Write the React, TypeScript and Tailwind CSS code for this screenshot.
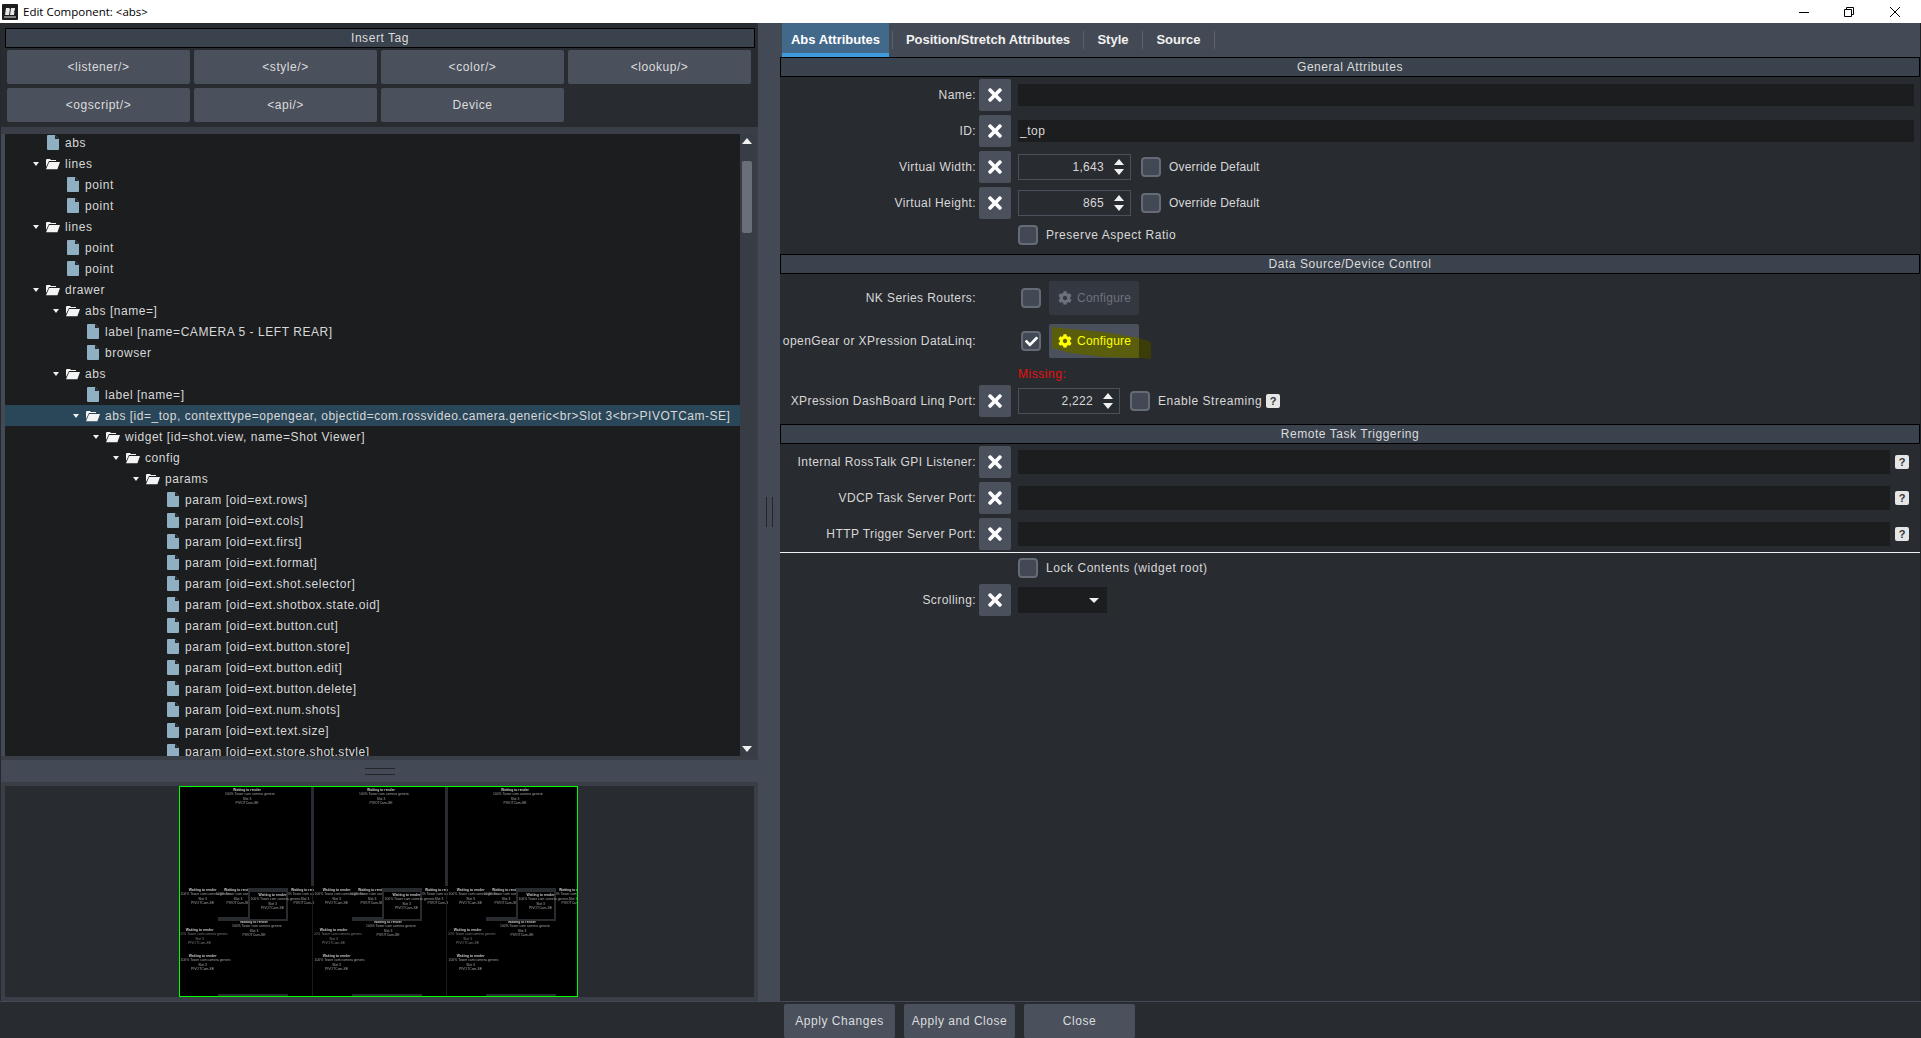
import { FaCheck, FaCog, FaTimes } from 'react-icons/fa';

const TAGS = ['<listener/>', '<style/>', '<color/>', '<lookup/>', '<ogscript/>', '<api/>', 'Device'];

type Node = { level: number; text: string; folder?: boolean; selected?: boolean };

const TREE: Node[] = [
  { level: 0, text: 'abs' },
  { level: 0, text: 'lines', folder: true },
  { level: 1, text: 'point' },
  { level: 1, text: 'point' },
  { level: 0, text: 'lines', folder: true },
  { level: 1, text: 'point' },
  { level: 1, text: 'point' },
  { level: 0, text: 'drawer', folder: true },
  { level: 1, text: 'abs [name=]', folder: true },
  { level: 2, text: 'label [name=CAMERA 5 - LEFT REAR]' },
  { level: 2, text: 'browser' },
  { level: 1, text: 'abs', folder: true },
  { level: 2, text: 'label [name=]' },
  {
    level: 2,
    text: 'abs [id=_top, contexttype=opengear, objectid=com.rossvideo.camera.generic<br>Slot 3<br>PIVOTCam-SE]',
    folder: true,
    selected: true,
  },
  { level: 3, text: 'widget [id=shot.view, name=Shot Viewer]', folder: true },
  { level: 4, text: 'config', folder: true },
  { level: 5, text: 'params', folder: true },
  { level: 6, text: 'param [oid=ext.rows]' },
  { level: 6, text: 'param [oid=ext.cols]' },
  { level: 6, text: 'param [oid=ext.first]' },
  { level: 6, text: 'param [oid=ext.format]' },
  { level: 6, text: 'param [oid=ext.shot.selector]' },
  { level: 6, text: 'param [oid=ext.shotbox.state.oid]' },
  { level: 6, text: 'param [oid=ext.button.cut]' },
  { level: 6, text: 'param [oid=ext.button.store]' },
  { level: 6, text: 'param [oid=ext.button.edit]' },
  { level: 6, text: 'param [oid=ext.button.delete]' },
  { level: 6, text: 'param [oid=ext.num.shots]' },
  { level: 6, text: 'param [oid=ext.text.size]' },
  { level: 6, text: 'param [oid=ext.store.shot.style]' },
];

const TILES = [
  { x: 67, y: 1, dim: false },
  { x: 22.6, y: 101, dim: false },
  { x: 58, y: 101, dim: false },
  { x: 125, y: 101, dim: false },
  { x: 74, y: 133, dim: false },
  { x: 19.6, y: 141, dim: true },
  { x: 22.6, y: 167, dim: false },
];

const FileIcon = () => (
  <svg width="12" height="15" viewBox="0 0 12 15" className="shrink-0">
    <path d="M1 0h7l4 4v10a1 1 0 0 1-1 1H1a1 1 0 0 1-1-1V1a1 1 0 0 1 1-1z" fill="#8fb0c2" />
    <path d="M8 0v4h4z" fill="#22262b" />
  </svg>
);

const FolderIcon = () => (
  <svg width="14" height="12" viewBox="0 0 14 12" className="shrink-0">
    <path d="M0 2a1 1 0 0 1 1-1h3l1 1h5v1H3L0 9z" fill="#f4f4f4" />
    <path d="M3.2 4H14l-2.6 7.2H0z" fill="#f4f4f4" />
  </svg>
);

const Caret = () => (
  <svg width="6" height="4" viewBox="0 0 6 4" className="shrink-0">
    <path d="M0 0h6L3 4z" fill="#f0f0f0" />
  </svg>
);

const TreeRow = ({ node }: { node: Node }) => (
  <div
    className={`flex h-[21px] items-center whitespace-nowrap ${node.selected ? 'bg-[#2a4659] tracking-[0.52px]' : ''}`}
    style={{ paddingLeft: (node.folder ? 28 : 42) + node.level * 20 }}
  >
    {node.folder && <Caret />}
    {node.folder ? (
      <span className="ml-[7px] mr-[5px] flex">
        <FolderIcon />
      </span>
    ) : (
      <span className="mr-[6px] flex">
        <FileIcon />
      </span>
    )}
    <span>{node.text}</span>
  </div>
);

const SectionHeader = ({ title, className = '' }: { title: string; className?: string }) => (
  <div
    className={`flex h-[20px] items-center justify-center border border-black bg-[#3a424d] text-[#dcdcdc] ${className}`}
  >
    {title}
  </div>
);

const ClearButton = () => (
  <button className="flex h-8 w-8 shrink-0 items-center justify-center rounded-[2px] bg-[#4a505c] text-white">
    <FaTimes className="h-[20px] w-[14px]" />
  </button>
);

const CheckBox = ({ checked, className = '' }: { checked?: boolean; className?: string }) => (
  <span
    className={`flex h-[20px] w-[20px] shrink-0 items-center justify-center rounded-[4px] border-2 border-[#656b76] bg-[#434954] text-white ${className}`}
  >
    {checked && <FaCheck className="h-[13px] w-[13px]" />}
  </span>
);

const Spinner = ({ value, className }: { value: string; className: string }) => (
  <div className={`flex h-[26px] items-center border border-[#4a505c] ${className}`}>
    <span className="flex-1 text-right tracking-[0.3px]">{value}</span>
    <svg width="10" height="16" viewBox="0 0 10 16" className="ml-[10px] mr-[6px] shrink-0">
      <path d="M5 0l5 6H0zM0 10h10l-5 6z" fill="#f0f0f0" />
    </svg>
  </div>
);

const HelpIcon = ({ className = '' }: { className?: string }) => (
  <span
    className={`flex h-[14px] w-[14px] shrink-0 items-center justify-center rounded-[2px] bg-[#e6e6e6] text-[11px] font-bold tracking-normal text-[#33363c] ${className}`}
  >
    ?
  </span>
);

const Row = ({ label, className = '', children }: { label: string; className?: string; children?: React.ReactNode }) => (
  <div className={`flex h-8 items-center ${className}`}>
    <span className="w-[196px] shrink-0 whitespace-nowrap text-right tracking-[0.42px]">{label}</span>
    <span className="ml-[3px] mr-[7px] flex">
      <ClearButton />
    </span>
    {children}
  </div>
);

const TextRow = ({ label, value, help }: { label: string; value?: string; help?: boolean }) => (
  <Row label={label}>
    <div
      className={`flex items-center bg-[#1b1d1f] px-[2px] ${
        help ? 'h-[24px] w-[872px]' : 'h-[22px] w-[896px]'
      }`}
    >
      {value}
    </div>
    {help && <HelpIcon className="ml-[5px]" />}
  </Row>
);

const ConfigureButton = ({ active }: { active?: boolean }) => (
  <div
    className={`relative ml-[8px] flex h-[34px] w-[90px] items-center rounded-[2px] pl-[9px] tracking-[0.25px] ${
      active ? 'bg-[#4a505c] text-[#ffff00]' : 'bg-[#343841] text-[#6c717a]'
    }`}
  >
    {active && (
      <svg width="102" height="35" viewBox="0 0 102 35" className="absolute left-0 top-0">
        <path d="M90 14l12 4v17l-12-1z" fill="#3b3d08" />
        <path d="M3 3l18 2 33 3 36 6v20l-36-1-33-4-18-5z" fill="#5a5e0c" />
      </svg>
    )}
    <FaCog className="relative h-[14px] w-[14px] shrink-0" />
    <span className="relative ml-[5px]">Configure</span>
  </div>
);

const Tile = ({ x, y, dim }: { x: number; y: number; dim?: boolean }) => (
  <div
    className={`absolute w-[44px] text-center text-[3.4px] leading-[4.3px] tracking-normal whitespace-nowrap blur-[0.25px] ${
      dim ? 'text-[#7a7a7a]' : 'text-[#a0a0a0]'
    }`}
    style={{ left: x - 22, top: y }}
  >
    <div className="font-bold text-[#c8c8c8]">Waiting to render</div>
    <div>100% Tower cam camera generic</div>
    <div>Slot 3</div>
    <div>PIVOTCam-SE</div>
  </div>
);

const PreviewPanel = () => (
  <div className="relative h-full w-[134px] shrink-0 overflow-hidden">
    {TILES.map((t) => (
      <Tile key={`${t.x}-${t.y}`} x={t.x} y={t.y} dim={t.dim} />
    ))}
    <div className="absolute left-[38px] top-[130px] h-[4px] w-[70px] bg-[#282b30]" />
    <div className="absolute left-[68px] top-[101px] h-[33px] w-[40px] border-2 border-t-4 border-[#282b30] bg-black" />
    <Tile x={92.5} y={106} />
    <div className="absolute left-[38px] top-[207px] h-[3px] w-[70px] bg-[#282b30]" />
    <div className="absolute right-0 top-0 h-[99px] w-[3px] bg-[#282b30]" />
    <div className="absolute bottom-0 right-[1px] top-[100px] w-px bg-[#1c1c1c]" />
  </div>
);

const App = () => {
  return (
    <div className="flex h-screen w-full flex-col overflow-hidden bg-[#282b30] font-['Liberation_Sans',sans-serif] text-[12px] tracking-[0.55px] text-[#d8d8d8]">
      {/* Window title bar */}
      <div className="flex h-[23px] shrink-0 items-center bg-white pl-[2px] tracking-normal text-black">
        <svg width="16" height="16" viewBox="0 0 16 16" className="shrink-0">
          <rect width="16" height="16" rx="1" fill="#1c1c1c" />
          <path d="M4 4h3l1 1-1 6H3zM9 4h4l-.4 3-.8.6.6.6-.4 2.8H8z" fill="#e8e8e8" />
          <rect x="2" y="12.5" width="12" height="1" fill="#e8e8e8" />
        </svg>
        <span className="ml-[5px] font-['Open_Sans',sans-serif] text-[11.5px]">Edit Component: &lt;abs&gt;</span>
        <div className="ml-auto flex items-center">
          <svg width="10" height="10" viewBox="0 0 10 10" className="mr-[35px]">
            <path d="M0 5.5h10" stroke="#000" />
          </svg>
          <svg width="10" height="10" viewBox="0 0 10 10" className="mr-[36px]">
            <path d="M.5 2.5h7v7h-7zM2.5 2.5v-2h7v7h-2" fill="none" stroke="#000" />
          </svg>
          <svg width="10" height="10" viewBox="0 0 10 10" className="mr-[21px]">
            <path d="M0 0l10 10M10 0L0 10" stroke="#000" />
          </svg>
        </div>
      </div>

      <div className="flex h-[978px] shrink-0 border-r border-[#202226]">
        {/* Left column: tag buttons, tree, preview */}
        <div className="flex h-full w-[758px] shrink-0 flex-col border-l border-[#25282c] bg-[#3a3e46]">
          <div className="h-[104px] shrink-0 bg-[#282b30] pl-[4px] pr-[3px] pt-[5px]">
            <div className="flex h-[20px] items-center justify-center border border-black bg-[#3a424d] text-[#dcdcdc]">
              Insert Tag
            </div>
            <div className="ml-[2px] mt-[2px] grid w-[744px] grid-cols-4 gap-x-[4px] gap-y-[4px]">
              {TAGS.map((tag) => (
                <button key={tag} className="h-[34px] rounded-[2px] bg-[#4a505c] text-[#dcdcdc]">
                  {tag}
                </button>
              ))}
            </div>
          </div>

          <div className="mt-[7px] flex h-[622px] shrink-0 border-l-4 border-[#444a55] bg-[#3a3e46] pr-[3px]">
            <div className="h-full w-[735px] shrink-0 overflow-hidden bg-[#1b1d1f]">
              <div className="-mt-[2px]">
                {TREE.map((node, i) => (
                  <TreeRow key={i} node={node} />
                ))}
              </div>
            </div>
            <div className="relative h-full flex-1 bg-[#383c44]">
              <svg width="10" height="6" viewBox="0 0 10 6" className="absolute left-[2px] top-[4px]">
                <path d="M5 0l5 6H0z" fill="#f0f0f0" />
              </svg>
              <div className="absolute left-[2px] top-[27px] h-[72px] w-[10px] rounded-[2px] bg-[#6a6e78]" />
              <svg width="10" height="6" viewBox="0 0 10 6" className="absolute bottom-[4px] left-[2px]">
                <path d="M0 0h10L5 6z" fill="#f0f0f0" />
              </svg>
            </div>
          </div>

          <div className="mt-[4px] flex h-[22px] shrink-0 flex-col items-center justify-center gap-[5px] bg-[#444a55]">
            <div className="h-px w-[30px] bg-[#22252a]" />
            <div className="h-px w-[30px] bg-[#22252a]" />
          </div>

          <div className="ml-[4px] mr-[4px] mt-[4px] flex h-[211px] shrink-0 bg-[#282b30] pl-[174px]">
            <div className="flex h-full w-[399px] shrink-0 overflow-hidden border-[1.5px] border-[#00ff00] bg-black">
              <PreviewPanel />
              <PreviewPanel />
              <PreviewPanel />
            </div>
          </div>
        </div>

        {/* Splitter */}
        <div className="flex h-full w-[22px] shrink-0 items-center justify-center gap-[5px] bg-[#444a55]">
          <div className="h-[30px] w-px bg-[#22252a]" />
          <div className="h-[30px] w-px bg-[#22252a]" />
        </div>

        {/* Right column: attributes */}
        <div className="flex h-full min-w-0 flex-1 flex-col">
          <div className="flex h-[34px] shrink-0 items-stretch bg-[#444a55] pl-[2px] text-[13px] font-bold tracking-normal text-[#f2f2f2]">
            <div className="flex w-[107px] items-center justify-center border-b-4 border-[#3f9bdc] bg-[#43698a] pt-[4px] text-white">
              Abs Attributes
            </div>
            <div className="my-[8px] ml-[3px] w-px bg-[#5b616c]" />
            <div className="flex w-[190px] items-center justify-center">Position/Stretch Attributes</div>
            <div className="my-[8px] w-px bg-[#5b616c]" />
            <div className="flex w-[58px] items-center justify-center">Style</div>
            <div className="my-[8px] w-px bg-[#5b616c]" />
            <div className="flex w-[71px] items-center justify-center">Source</div>
            <div className="my-[8px] w-px bg-[#5b616c]" />
          </div>

          <SectionHeader title="General Attributes" />
          <div className="mt-[2px] flex flex-col gap-[4px]">
            <TextRow label="Name:" />
            <TextRow label="ID:" value="_top" />
            <Row label="Virtual Width:">
              <Spinner value="1,643" className="w-[113px]" />
              <CheckBox className="ml-[10px]" />
              <span className="ml-[8px] tracking-[0.2px]">Override Default</span>
            </Row>
            <Row label="Virtual Height:">
              <Spinner value="865" className="w-[113px]" />
              <CheckBox className="ml-[10px]" />
              <span className="ml-[8px] tracking-[0.2px]">Override Default</span>
            </Row>
          </div>
          <div className="ml-[238px] mt-[6px] flex h-[19px] items-center">
            <CheckBox />
            <span className="ml-[8px]">Preserve Aspect Ratio</span>
          </div>

          <SectionHeader title="Data Source/Device Control" className="mt-[10px]" />
          <div className="mt-[7px] flex h-[34px] items-center">
            <span className="w-[196px] shrink-0 text-right tracking-[0.42px]">NK Series Routers:</span>
            <CheckBox className="ml-[45px]" />
            <ConfigureButton />
          </div>
          <div className="mt-[9px] flex h-[34px] items-center">
            <span className="w-[196px] shrink-0 whitespace-nowrap text-right tracking-[0.42px]">
              openGear or XPression DataLinq:
            </span>
            <CheckBox checked className="ml-[45px]" />
            <ConfigureButton active />
          </div>
          <div className="ml-[238px] mt-[8px] h-[16px] leading-[16px] text-[#e81010]">Missing:</div>
          <Row label="XPression DashBoard Linq Port:" className="mt-[3px]">
            <Spinner value="2,222" className="w-[102px]" />
            <CheckBox className="ml-[10px]" />
            <span className="ml-[8px]">Enable Streaming</span>
            <HelpIcon className="ml-[4px]" />
          </Row>

          <SectionHeader title="Remote Task Triggering" className="mt-[7px]" />
          <div className="mt-[2px] flex flex-col gap-[4px]">
            <TextRow label="Internal RossTalk GPI Listener:" help />
            <TextRow label="VDCP Task Server Port:" help />
            <TextRow label="HTTP Trigger Server Port:" help />
          </div>
          <div className="mt-[2px] h-px bg-[#f0f0f0]" />
          <div className="ml-[238px] mt-[5px] flex h-[19px] items-center">
            <CheckBox />
            <span className="ml-[8px]">Lock Contents (widget root)</span>
          </div>
          <Row label="Scrolling:" className="mt-[7px]">
            <div className="flex h-[26px] w-[89px] items-center justify-end bg-[#1b1d1f] pr-[8px]">
              <svg width="10" height="5" viewBox="0 0 10 5">
                <path d="M0 0h10L5 5z" fill="#f0f0f0" />
              </svg>
            </div>
          </Row>
        </div>
      </div>

      {/* Dialog buttons */}
      <div className="flex flex-1 gap-[9px] border-t border-[#444a55] pl-[784px] pt-[2px]">
        {['Apply Changes', 'Apply and Close', 'Close'].map((label) => (
          <button key={label} className="h-[34px] w-[111px] rounded-[2px] bg-[#4a505c] text-[#dcdcdc]">
            {label}
          </button>
        ))}
      </div>
    </div>
  );
};

export default App;
